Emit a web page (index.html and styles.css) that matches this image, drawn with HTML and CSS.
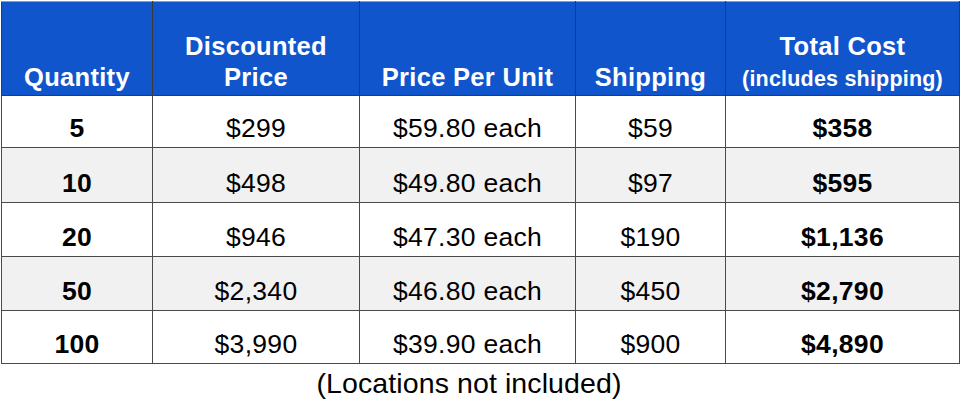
FILE: index.html
```html
<!DOCTYPE html>
<html>
<head>
<meta charset="utf-8">
<link rel="stylesheet" href="styles.css">
</head>
<body>
<div class="wrap">
<table class="prices">
  <colgroup>
    <col class="c1"><col class="c2"><col class="c3"><col class="c4"><col class="c5">
  </colgroup>
  <thead>
    <tr>
      <th>Quantity</th>
      <th>Discounted<br>Price</th>
      <th>Price Per Unit</th>
      <th>Shipping</th>
      <th><span class="total">Total Cost</span><br><span class="sub">(includes shipping)</span></th>
    </tr>
  </thead>
  <tbody>
    <tr class="r1"><td class="b">5</td><td>$299</td><td>$59.80 each</td><td>$59</td><td class="b">$358</td></tr>
    <tr class="r2 alt"><td class="b">10</td><td>$498</td><td>$49.80 each</td><td>$97</td><td class="b">$595</td></tr>
    <tr class="r3"><td class="b">20</td><td>$946</td><td>$47.30 each</td><td>$190</td><td class="b">$1,136</td></tr>
    <tr class="r4 alt"><td class="b">50</td><td>$2,340</td><td>$46.80 each</td><td>$450</td><td class="b">$2,790</td></tr>
    <tr class="r5"><td class="b">100</td><td>$3,990</td><td>$39.90 each</td><td>$900</td><td class="b">$4,890</td></tr>
  </tbody>
</table>
<p class="note">(Locations not included)</p>
</div>
</body>
</html>
```

FILE: styles.css
```css
html, body {
  margin: 0;
  padding: 0;
  background: #ffffff;
}
body {
  font-family: "Liberation Sans", Arial, sans-serif;
  color: #000;
}
.wrap {
  padding: 1px 0 0 1px;
  width: 958px;
}
.prices {
  border-collapse: collapse;
  table-layout: fixed;
  width: 958px;
}
.c1 { width: 151px; }
.c2 { width: 207px; }
.c3 { width: 216px; }
.c4 { width: 150px; }
.c5 { width: 234px; }
.prices th, .prices td {
  border: 1px solid #4a4a4a;
  text-align: center;
  vertical-align: bottom;
  padding: 0;
}
.prices thead tr { height: 94px; }
.prices th {
  background: #1155cc;
  color: #fff;
  font-weight: bold;
  font-size: 25.5px;
  line-height: 31px;
  padding-bottom: 2px;
  letter-spacing: 0.3px;
  border-color: #3a3a3a;
  border-top-color: #9a9a9a;
}
.prices th .total {
  display: inline-block;
  padding-top: 3px;
}
.prices th .sub {
  display: inline-block;
  font-size: 21.5px;
  line-height: 26px;
  letter-spacing: 0.2px;
  padding-top: 1px;
}
.prices td {
  font-size: 26.5px;
  line-height: 30px;
  padding-bottom: 4px;
  letter-spacing: 0.3px;
}
.prices td.b { font-weight: bold; }
.prices .r1 { height: 52px; }
.prices .r2 { height: 55px; }
.prices .r3 { height: 54px; }
.prices .r4 { height: 54px; }
.prices .r5 { height: 53px; }
.prices tr.alt td { background: #f1f1f1; }
.note {
  margin: 2px 0 0;
  text-align: center;
  font-size: 28.5px;
  line-height: 34px;
  padding-right: 22px;
  letter-spacing: 0.1px;
}
```
